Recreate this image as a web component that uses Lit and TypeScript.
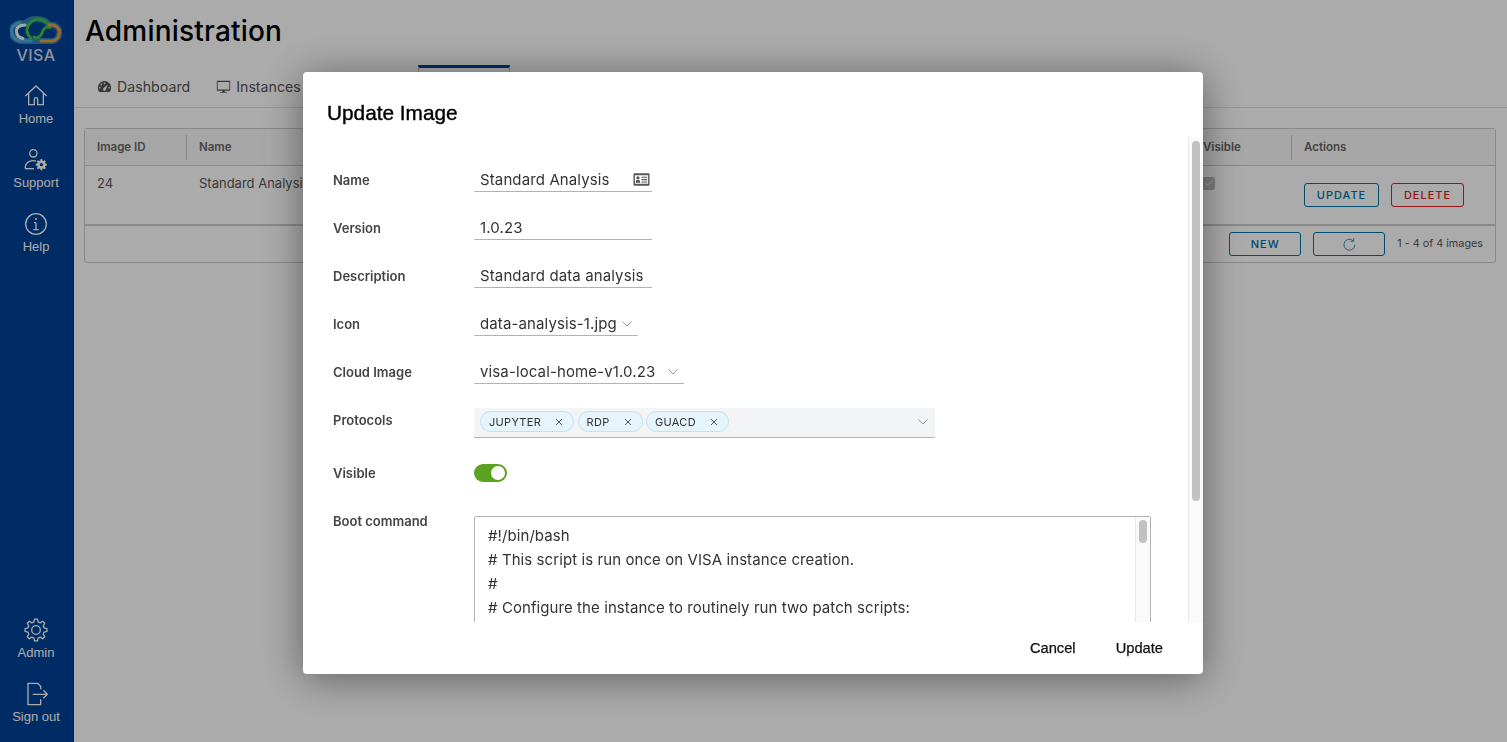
import { LitElement, css, html, svg } from "lit";
import { customElement } from "lit/decorators.js";

// cog outline, teeth count and radii are eyeballed from the reference
function gearPath(cx: number, cy: number, outer: number, root: number, teeth: number): string {
  const pts: string[] = [];
  const step = (Math.PI * 2) / teeth;
  for (let i = 0; i < teeth; i++) {
    const a = i * step - Math.PI / 2;
    const at = (r: number, t: number) =>
      `${(cx + r * Math.cos(a + t * step)).toFixed(2)} ${(cy + r * Math.sin(a + t * step)).toFixed(2)}`;
    pts.push(at(root, -0.32), at(outer, -0.17), at(outer, 0.17), at(root, 0.32));
  }
  return `M${pts.join("L")}Z`;
}

const icons = {
  home: svg`<path d="M2 18 18 3l16 15" /><path d="M7 14v17h8.500v-8a2.500 2.500 0 0 1 5 0v8H29V14" />`,
  support: svg`<circle cx="14" cy="8" r="5.500" /><path d="M2 31v-3c0-5 5-9 12-9 1.500 0 3 .2 4 .6" /><path d="M2 31h13" /><path d="${gearPath(26, 25, 8.5, 6.5, 8)}" fill="currentColor" stroke="none" /><circle cx="26" cy="25" r="2.500" fill="#004299" stroke="none" />`,
  info: svg`<circle cx="18" cy="18" r="15.500" /><path d="M18 16v10M14 26.500h8M15 16h3" /><circle cx="18" cy="10.500" r="1.500" fill="currentColor" stroke="none" />`,
  gear: svg`<path d="${gearPath(18, 18, 16.5, 12.5, 8)}" stroke-linejoin="round" /><circle cx="18" cy="18" r="6.500" />`,
  signout: svg`<path d="M25 11V6.500L20.500 2H6v32h19v-8" /><path d="M13 18.500h22M29 12.500l6 6-6 6" />`,
};

const caret = html`<svg class="caret" viewBox="0 0 10 6"><path d="M.5.5 5 5 9.500.5" /></svg>`;

function navIcon(name: keyof typeof icons) {
  return html`<svg class="nav-icon" viewBox="0 0 36 36">${icons[name]}</svg>`;
}

@customElement("app-root")
export class AppRoot extends LitElement {
  static styles = css`
    :host {
      display: block;
      height: 742px;
      overflow: hidden;
      font-family: Inter, "Liberation Sans", sans-serif;
      color: #565656;
      background: #fff;
    }
    .layout {
      display: flex;
      height: 742px;
    }
    .sidebar {
      flex: 0 0 74px;
      box-sizing: border-box;
      border-right: 1px solid #003a85;
      padding-right: 1px;
      display: flex;
      flex-direction: column;
      align-items: center;
      background: #004299;
      color: #fff;
      font-family: "Liberation Sans", Arial, sans-serif;
      font-size: 13px;
    }
    .logo {
      display: flex;
      flex-direction: column;
      align-items: center;
      height: 84px;
      padding-top: 15px;
      box-sizing: border-box;
    }
    .logo svg {
      filter: blur(0.4px);
    }
    .logo span {
      font-family: Inter, sans-serif;
      font-size: 16px;
      line-height: 16px;
      font-weight: 500;
      letter-spacing: 0.4px;
      margin-top: 3px;
      color: #d6dbe4;
    }
    .nav-item {
      display: flex;
      flex-direction: column;
      align-items: center;
      height: 64px;
      gap: 3px;
    }
    .nav-item:last-child {
      height: 60px;
    }
    .nav-icon {
      width: 24px;
      height: 24px;
      fill: none;
      stroke: currentColor;
      stroke-width: 2;
    }
    .spacer {
      flex: 1;
    }
    .main {
      flex: 1;
      min-width: 0;
    }
    h1 {
      margin: 0;
      padding: 14px 0 0 11px;
      height: 65px;
      box-sizing: border-box;
      font-size: 28px;
      line-height: 34px;
      font-weight: 500;
      letter-spacing: 0.2px;
      color: #000;
    }
    .tabs {
      display: flex;
      height: 42px;
      border-bottom: 1px solid #ddd;
      padding-left: 23px;
      font-size: 14.2px;
    }
    .tab {
      display: flex;
      align-items: center;
      gap: 5px;
      margin-right: 26px;
      padding-top: 1px;
    }
    .tab svg {
      width: 15px;
      height: 15px;
      fill: #565656;
    }
    .tab.active {
      width: 92px;
      margin-left: 91px;
      padding-top: 0;
      box-sizing: border-box;
      border-top: 3px solid #004299;
      border-left: 1px solid #ccc;
      border-right: 1px solid #ccc;
    }
    .card {
      margin: 20px 11px 0 10px;
      border: 1px solid #ccc;
      border-radius: 3px;
      background: #fff;
      height: 135px;
      box-sizing: border-box;
      display: flex;
      flex-direction: column;
    }
    .row {
      display: grid;
      grid-template-columns: 101px 1004px 101px 1fr;
    }
    .thead {
      height: 36px;
      border-bottom: 1px solid #ccc;
      background: #fafafa;
      font-size: 11.5px;
      font-weight: 600;
      color: #666;
      align-items: center;
    }
    .thead > div {
      padding-left: 12px;
      line-height: 25px;
      border-left: 1px solid #ccc;
    }
    .thead > div:first-child {
      border-left: 0;
    }
    .tbody {
      height: 58px;
      font-size: 13px;
      border-bottom: 2px solid #ccc;
    }
    .tbody > div {
      padding: 9px 0 0 12px;
      line-height: 16px;
    }
    .tbody > div:nth-child(2) {
      padding-left: 13px;
    }
    .check {
      display: block;
      width: 13px;
      height: 13px;
      margin-top: 2px;
      border-radius: 2px;
      background: #bbb;
      color: #eee;
      font-size: 11px;
      line-height: 13px;
      text-align: center;
    }
    .tbody > .actions {
      display: flex;
      gap: 12px;
      padding: 17px 0 0 13px;
    }
    .btn {
      display: flex;
      align-items: center;
      justify-content: center;
      height: 24px;
      box-sizing: border-box;
      border: 1px solid #0072a3;
      border-radius: 3px;
      color: #0072a3;
      font-size: 11px;
      font-weight: 500;
      letter-spacing: 1px;
      width: 75px;
    }
    .btn.danger {
      border-color: #e02020;
      color: #e02020;
      width: 73px;
    }
    .tfoot {
      flex: 1;
      display: flex;
      justify-content: flex-end;
      align-items: center;
      gap: 12px;
      padding: 0 12px 1px 0;
      font-size: 10.8px;
      color: #565656;
    }
    .tfoot .btn {
      width: 72px;
    }
    .tfoot svg {
      width: 14px;
      height: 14px;
      fill: none;
      stroke: currentColor;
      stroke-width: 2;
    }
    .scrim {
      position: fixed;
      inset: 0;
      background: rgba(0, 0, 0, 0.33);
    }
    .modal {
      position: fixed;
      left: 303px;
      top: 72px;
      width: 900px;
      height: 602px;
      background: #fff;
      border-radius: 4px;
      box-shadow: 0 4px 40px rgba(0, 0, 0, 0.45);
      display: flex;
      flex-direction: column;
      overflow: hidden;
    }
    h2 {
      margin: 0;
      padding: 29px 24px 0;
      height: 65px;
      box-sizing: border-box;
      flex: none;
      font-family: "Liberation Sans", Arial, sans-serif;
      font-size: 20.8px;
      line-height: 24px;
      font-weight: 400;
      -webkit-text-stroke: 0.4px #000;
      color: #000;
    }
    .modal-body {
      flex: 1;
      min-height: 0;
      display: flex;
      overflow: hidden;
    }
    .form {
      flex: 1;
      min-width: 0;
      padding: 31px 37px 0 30px;
      overflow: hidden;
    }
    .track {
      flex: 0 0 15px;
      box-sizing: border-box;
      border-left: 1px solid #e8e8e8;
      background: #fafafa;
      padding: 4px 3px 0 3px;
    }
    .thumb {
      height: 360px;
      border-radius: 4px;
      background: #c1c1c1;
    }
    .field {
      display: grid;
      grid-template-columns: 141px 1fr;
      height: 48px;
    }
    .field label {
      font-size: 13px;
      font-weight: 600;
      color: #444;
      line-height: 20px;
      padding-top: 2px;
    }
    .input {
      display: flex;
      align-items: center;
      justify-content: space-between;
      height: 24px;
      box-sizing: border-box;
      border-bottom: 1px solid #b3b3b3;
      padding: 0 2px 0 6px;
      font-size: 15px;
      letter-spacing: 0.12px;
      color: #333;
      width: 178px;
      white-space: nowrap;
    }
    .name-icon {
      flex: none;
      width: 17px;
      height: 17px;
      fill: #565656;
    }
    .input.icon-select {
      width: 164px;
      padding-right: 6px;
    }
    .input.cloud-select {
      width: 210px;
      padding-right: 6px;
    }
    .caret {
      flex: none;
      width: 10px;
      height: 6px;
      fill: none;
      stroke: #999;
      stroke-width: 1;
    }
    .multi {
      display: flex;
      align-items: center;
      gap: 3.5px;
      width: 461px;
      height: 30px;
      box-sizing: border-box;
      padding: 0 7px 2px 6px;
      background: #f3f4f5;
      border-bottom: 1px solid #b3b3b3;
    }
    .chip {
      display: flex;
      align-items: center;
      gap: 14px;
      height: 21px;
      box-sizing: border-box;
      padding: 0 10px 0 8px;
      border: 1px solid #bfe3f2;
      border-radius: 11px;
      background: #e6f4fb;
      font-size: 11px;
      letter-spacing: 0.3px;
      color: #333;
    }
    .chip svg {
      width: 8px;
      height: 8px;
      stroke: #555;
      stroke-width: 1;
    }
    .multi .caret {
      margin-left: auto;
    }
    .field.visible {
      margin-top: 5px;
    }
    .toggle {
      width: 33px;
      height: 18px;
      margin-top: 3px;
      border-radius: 9px;
      background: #5aa220;
      position: relative;
    }
    .toggle::after {
      content: "";
      position: absolute;
      right: 2px;
      top: 2px;
      width: 14px;
      height: 14px;
      border-radius: 50%;
      background: #fff;
    }
    .textarea {
      display: flex;
      width: 677px;
      height: 240px;
      margin-top: 7px;
      border: 1px solid #b3b3b3;
      border-radius: 2px;
      box-sizing: border-box;
    }
    .code {
      flex: 1;
      padding: 7px 13px;
      font-size: 15px;
      letter-spacing: 0.08px;
      line-height: 24px;
      color: #333;
      white-space: pre;
    }
    .code-track {
      flex: 0 0 15px;
      box-sizing: border-box;
      border-left: 1px solid #e8e8e8;
      background: #fafafa;
      padding: 3px 3px 0;
    }
    .code-thumb {
      height: 23px;
      border-radius: 4px;
      background: #c1c1c1;
    }
    .modal-foot {
      flex: none;
      height: 52px;
      display: flex;
      justify-content: flex-end;
      align-items: center;
      gap: 40px;
      padding-right: 40px;
      font-family: "Liberation Sans", Arial, sans-serif;
      font-size: 14.7px;
      -webkit-text-stroke: 0.25px #111;
      color: #111;
    }
  `;

  render() {
    return html`
      <div class="layout">
        <nav class="sidebar">
          <div class="logo">
            <svg width="52" height="29" viewBox="0 0 52 29" fill="none" stroke-linecap="round">
              <g stroke="#8fdbe6" stroke-width="6" opacity=".4">
                <path d="M10 8C4 9 1 13 1.500 17 2 22 6 26 11.500 26H42c4 0 7.500-4 7.500-9 0-4-4.500-8-10.500-7C37 6 34 5 31 4.500 24 3 18 5 15 8.500Z" />
              </g>
              <path d="M10 8C4 9 1 13 1.500 17 2 22 6 26 11.500 26H21" stroke="#44b6dc" stroke-width="3" />
              <path d="M15 10c-6 0-9 3-8.500 7 .5 4 3.500 6 6.500 6.500" stroke="#f4f7f9" stroke-width="3" />
              <path d="M21 23c-4-3-5-7-3-12 3-6 9-8 13-6.500 4 1 7 3.500 9 7.500" stroke="#3cc24e" stroke-width="3" />
              <path d="M24 22c4 2 7-1 8-4 1-4 4-7 8-5.500" stroke="#3cc24e" stroke-width="3" />
              <path d="M39 10c6-1 10.500 3 10.500 7 0 5-3.500 9-7.500 9H31" stroke="#eb9d40" stroke-width="3" />
            </svg>
            <span>VISA</span>
          </div>
          <div class="nav-item">${navIcon("home")}Home</div>
          <div class="nav-item">${navIcon("support")}Support</div>
          <div class="nav-item">${navIcon("info")}Help</div>
          <div class="spacer"></div>
          <div class="nav-item">${navIcon("gear")}Admin</div>
          <div class="nav-item">${navIcon("signout")}Sign out</div>
        </nav>
        <main class="main">
          <h1>Administration</h1>
          <div class="tabs">
            <div class="tab">
              <svg viewBox="0 0 36 36"><path d="M18 5a16 16 0 0 0-16 16c0 3.500 1 7 3 10h26c2-3 3-6.500 3-10A16 16 0 0 0 18 5Zm0 3.500a2 2 0 1 1 0 4 2 2 0 0 1 0-4ZM7 23a2 2 0 1 1 0-4 2 2 0 0 1 0 4Zm3.500-8a2 2 0 1 1 0-4 2 2 0 0 1 0 4Zm10 12a3.500 3.500 0 0 1-5-5l10-9-5 14Zm8.500-4a2 2 0 1 1 0-4 2 2 0 0 1 0 4Z" fill-rule="evenodd" /></svg>
              Dashboard
            </div>
            <div class="tab">
              <svg viewBox="0 0 36 36"><path d="M3 4h30a1 1 0 0 1 1 1v22a1 1 0 0 1-1 1H21v3h5v2H10v-2h5v-3H3a1 1 0 0 1-1-1V5a1 1 0 0 1 1-1Zm1 3v18h28V7Z" fill-rule="evenodd" /></svg>
              Instances
            </div>
            <div class="tab active"></div>
          </div>
          <section class="card">
            <div class="row thead">
              <div>Image ID</div>
              <div>Name</div>
              <div>Visible</div>
              <div>Actions</div>
            </div>
            <div class="row tbody">
              <div>24</div>
              <div>Standard Analysis</div>
              <div><span class="check">✓</span></div>
              <div class="actions">
                <div class="btn">UPDATE</div>
                <div class="btn danger">DELETE</div>
              </div>
            </div>
            <div class="tfoot">
              <div class="btn">NEW</div>
              <div class="btn">
                <svg viewBox="0 0 36 36"><path d="M29 10a14 14 0 1 0 4 10" /><path d="M30 3v8h-8" /></svg>
              </div>
              <span>1 - 4 of 4 images</span>
            </div>
          </section>
        </main>
      </div>
      <div class="scrim"></div>
      <div class="modal">
        <h2>Update Image</h2>
        <div class="modal-body">
          <div class="form">
            <div class="field">
              <label>Name</label>
              <div class="input">
                Standard Analysis
                <svg class="name-icon" viewBox="0 0 36 36"><path fill-rule="evenodd" d="M3 5h30a2 2 0 0 1 2 2v22a2 2 0 0 1-2 2H3a2 2 0 0 1-2-2V7a2 2 0 0 1 2-2Zm1 4v18h28V9ZM10.500 11a3.500 3.500 0 1 1 0 7 3.500 3.500 0 0 1 0-7ZM6 25v-3c0-2 2-3 4.500-3s4.500 1 4.500 3v3Zm12-13h12v2.500H18Zm0 5h12v2.500H18Zm0 5h12v2.500H18Z" /></svg>
              </div>
            </div>
            <div class="field">
              <label>Version</label>
              <div class="input">1.0.23</div>
            </div>
            <div class="field">
              <label>Description</label>
              <div class="input">Standard data analysis</div>
            </div>
            <div class="field">
              <label>Icon</label>
              <div class="input icon-select">data-analysis-1.jpg ${caret}</div>
            </div>
            <div class="field">
              <label>Cloud Image</label>
              <div class="input cloud-select">visa-local-home-v1.0.23 ${caret}</div>
            </div>
            <div class="field">
              <label>Protocols</label>
              <div class="multi">
                ${["JUPYTER", "RDP", "GUACD"].map(
                  (p) => html`<span class="chip">${p}<svg viewBox="0 0 8 8"><path d="m1 1 6 6M7 1 1 7" /></svg></span>`,
                )}
                ${caret}
              </div>
            </div>
            <div class="field visible">
              <label>Visible</label>
              <div class="toggle"></div>
            </div>
            <div class="field">
              <label>Boot command</label>
              <div class="textarea">
                <div class="code">#!/bin/bash
# This script is run once on VISA instance creation.
#
# Configure the instance to routinely run two patch scripts:</div>
                <div class="code-track"><div class="code-thumb"></div></div>
              </div>
            </div>
          </div>
          <div class="track"><div class="thumb"></div></div>
        </div>
        <div class="modal-foot">
          <span>Cancel</span>
          <span>Update</span>
        </div>
      </div>
    `;
  }
}
